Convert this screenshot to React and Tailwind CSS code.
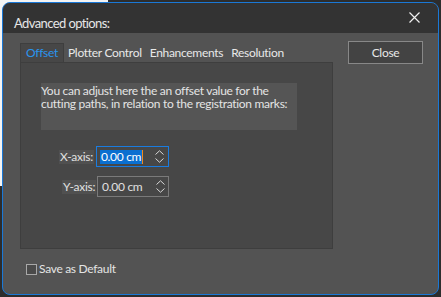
import React from "react";

function Chevrons() {
  return (
    <div className="flex flex-col items-center justify-center w-[14px] h-full gap-[3px]">
      <svg width="9" height="5" viewBox="0 0 9 5"><path d="M0.5 4.5 L4.5 0.8 L8.5 4.5" fill="none" stroke="#d8d8d8" strokeWidth="1" /></svg>
      <svg width="9" height="5" viewBox="0 0 9 5"><path d="M0.5 0.5 L4.5 4.2 L8.5 0.5" fill="none" stroke="#d8d8d8" strokeWidth="1" /></svg>
    </div>
  );
}

export default function App() {
  const font = { fontFamily: 'Lato, "Noto Sans", sans-serif' };
  return (
    <div className="w-[441px] h-[297px] bg-[#2d2d2d] relative overflow-hidden tracking-[-0.3px]" style={font}>
      <div className="absolute left-0 top-0 w-[108px] h-[186px] bg-[#f4f4f4]" />
      <div className="absolute left-[2px] top-[2px] w-[437px] h-[293px] rounded-[8px] border border-[#1a78d6] bg-[#535353] overflow-hidden flex flex-col">
        <div className="h-[30px] bg-[#333333] flex items-start justify-between pl-[11px] pr-[18px] shrink-0">
          <span className="text-[13px] tracking-[-0.6px] text-[#e6e6e6] mt-[13px] leading-[15px]">Advanced options:</span>
          <svg className="mt-[9px]" width="11" height="11" viewBox="0 0 11 11"><path d="M0.5 0.5 L10.5 10.5 M10.5 0.5 L0.5 10.5" stroke="#f0f0f0" strokeWidth="1.2" /></svg>
        </div>
        <div className="flex pl-[17px] pt-[8px] pr-[15px]">
          <div className="flex flex-col w-[313px]">
            <div className="flex h-[21px] text-[12px] text-[#e8e8e8] leading-none items-end">
              <div className="w-[44px] h-[19px] border border-b-0 border-[#3e3e3e] bg-[#474747] text-[#2a95ee] flex items-center pl-[5px]">Offset</div>
              <div className="flex items-center h-[19px] pl-[4px]">Plotter Control</div>
              <div className="flex items-center h-[19px] pl-[8px]">Enhancements</div>
              <div className="flex items-center h-[19px] pl-[8px]">Resolution</div>
            </div>
            <div className="h-[187px] border border-[#3e3e3e] bg-[#474747] pt-[20px] pl-[20px]">
              <div className="w-[256px] h-[47px] bg-[#555555] text-[12px] leading-[13px] text-[#e4e4e4] pt-[1px]">
                You can adjust here the an offset value for the cutting paths, in relation to the registration marks:
              </div>
              <div className="flex items-center mt-[16px] h-[21px]">
                <span className="ml-[18px] bg-[#505050] text-[12px] text-[#e0e0e0] leading-[14px] px-[1px]">X-axis:</span>
                <div className="ml-[2px] w-[73px] h-[21px] border border-[#1a7ce0] flex items-center justify-between pl-[3px] pr-[1px]">
                  <span className="bg-[#0a6fd0] text-white text-[12px] leading-[14px] px-[1px] border-r border-[#f28a1a]">0.00 cm</span>
                  <Chevrons />
                </div>
              </div>
              <div className="flex items-center mt-[9px] h-[21px]">
                <span className="ml-[21px] bg-[#505050] text-[12px] text-[#e0e0e0] leading-[14px] px-[1px]">Y-axis:</span>
                <div className="ml-[1px] w-[72px] h-[21px] border border-[#7a7a7a] flex items-center justify-between pl-[3px] pr-[1px]">
                  <span className="text-[#e0e0e0] text-[12px] leading-[14px] px-[1px]">0.00 cm</span>
                  <Chevrons />
                </div>
              </div>
            </div>
          </div>
          <div className="ml-auto w-[75px] h-[23px] border border-[#888888] bg-[#434343] text-[12px] text-[#e8e8e8] flex items-center justify-center">Close</div>
        </div>
        <div className="flex items-center pl-[23px] mt-[14px]">
          <div className="w-[11px] h-[11px] border border-[#a8a8a8] bg-[#4a4a4a]" />
          <span className="ml-[2px] text-[12px] text-[#e4e4e4] leading-none">Save as Default</span>
        </div>
      </div>
    </div>
  );
}
